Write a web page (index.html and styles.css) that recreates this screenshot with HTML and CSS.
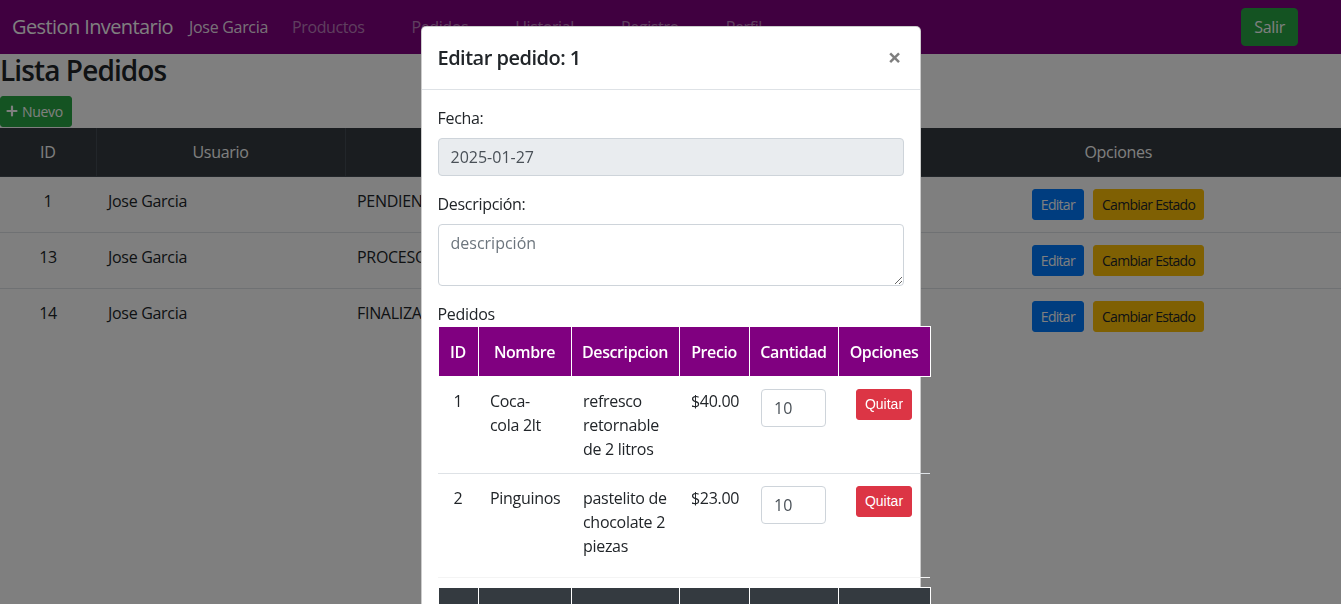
FILE: index.html
```html
<!DOCTYPE html>
<html lang="es">
<head>
<meta charset="utf-8">
<title>Gestion Inventario</title>
<link rel="stylesheet" href="styles.css">
</head>
<body>
<nav class="navbar">
  <span class="brand">Gestion Inventario</span>
  <span class="user">Jose Garcia</span>
  <a class="nav-link">Productos</a>
  <a class="nav-link">Pedidos</a>
  <a class="nav-link">Historial</a>
  <a class="nav-link">Registro</a>
  <a class="nav-link">Perfil</a>
  <button class="btn btn-success salir">Salir</button>
</nav>

<main class="page">
  <h3 class="title">Lista Pedidos</h3>
  <button class="btn btn-sm btn-success nuevo"><svg class="plus" viewBox="0 0 12 12" width="12" height="12"><path d="M6 1.5v9M1.5 6h9" stroke="currentColor" stroke-width="2.2" fill="none" stroke-linecap="round"/></svg>Nuevo</button>
  <table class="list">
    <colgroup><col class="c-id"><col class="c-user"><col class="c-estado"><col class="c-fecha"><col class="c-opt"></colgroup>
    <thead>
      <tr><th>ID</th><th>Usuario</th><th>Estado</th><th>Fecha</th><th>Opciones</th></tr>
    </thead>
    <tbody>
      <tr><td class="center">1</td><td>Jose Garcia</td><td>PENDIENTE</td><td></td><td class="center"><button class="btn btn-sm btn-primary">Editar</button><button class="btn btn-sm btn-warning">Cambiar Estado</button></td></tr>
      <tr><td class="center">13</td><td>Jose Garcia</td><td>PROCESO</td><td></td><td class="center"><button class="btn btn-sm btn-primary">Editar</button><button class="btn btn-sm btn-warning">Cambiar Estado</button></td></tr>
      <tr><td class="center">14</td><td>Jose Garcia</td><td>FINALIZADO</td><td></td><td class="center"><button class="btn btn-sm btn-primary">Editar</button><button class="btn btn-sm btn-warning">Cambiar Estado</button></td></tr>
    </tbody>
  </table>
</main>

<div class="backdrop"></div>

<div class="modal">
  <div class="modal-dialog">
    <div class="modal-header">
      <h5 class="modal-title">Editar pedido: 1</h5>
      <button class="close">&times;</button>
    </div>
    <div class="modal-body">
      <div class="form-group">
        <label>Fecha:</label>
        <input class="form-control" type="text" value="2025-01-27" readonly>
      </div>
      <div class="form-group">
        <label>Descripción:</label>
        <textarea class="form-control" rows="2" placeholder="descripción"></textarea>
      </div>
      <div class="sub-label">Pedidos</div>
      <table class="items">
        <colgroup><col class="i-id"><col class="i-nom"><col class="i-desc"><col class="i-pre"><col class="i-cant"><col class="i-opt"></colgroup>
        <thead>
          <tr><th>ID</th><th>Nombre</th><th>Descripcion</th><th>Precio</th><th>Cantidad</th><th>Opciones</th></tr>
        </thead>
        <tbody>
          <tr><td class="center">1</td><td class="nom">Coca-cola 2lt</td><td>refresco retornable de 2 litros</td><td>$40.00</td><td><input class="form-control qty" type="text" value="10"></td><td class="center"><button class="btn btn-sm btn-danger quitar">Quitar</button></td></tr>
          <tr class="last"><td class="center">2</td><td class="nom">Pinguinos</td><td>pastelito de chocolate 2 piezas</td><td>$23.00</td><td><input class="form-control qty" type="text" value="10"></td><td class="center"><button class="btn btn-sm btn-danger quitar">Quitar</button></td></tr>
          <tr class="spacer"><td colspan="6"></td></tr>
        </tbody>
        <tfoot>
          <tr><td></td><td></td><td></td><td></td><td></td><td></td></tr>
        </tfoot>
      </table>
    </div>
  </div>
</div>
</body>
</html>
```
FILE: styles.css
```css
* { box-sizing: border-box; }

html, body {
  margin: 0;
  height: 100%;
  overflow: hidden;
}

body {
  font-family: "Open Sans", "Noto Sans", sans-serif;
  font-size: 16px;
  line-height: 1.5;
  color: #212529;
  background: #fff;
}

/* Navbar */
.navbar {
  display: flex;
  align-items: center;
  height: 54px;
  padding: 8px 43px 8px 12px;
  background: #800080;
}
.brand {
  font-size: 20px;
  color: #fff;
  margin-right: 16px;
  line-height: 30px;
  letter-spacing: -0.6px;
}
.user {
  color: rgba(255, 255, 255, 0.9);
  letter-spacing: -0.3px;
}
.nav-link {
  color: rgba(255, 255, 255, 0.5);
  padding: 0 23.5px;
  letter-spacing: -0.4px;
}
.user + .nav-link { padding-left: 24px; }

/* Buttons */
.btn {
  display: inline-block;
  font-family: inherit;
  font-size: 16px;
  line-height: 1.5;
  padding: 6px 12px;
  border: 1px solid transparent;
  border-radius: 4px;
  cursor: pointer;
}
.btn-sm {
  font-size: 14px;
  padding: 4px 8px;
  border-radius: 3px;
}
.btn-success { background: #28a745; border-color: #28a745; color: #fff; }
.btn-primary { background: #007bff; border-color: #007bff; color: #fff; }
.btn-warning { background: #ffc107; border-color: #ffc107; color: #212529; }
.btn-danger  { background: #dc3545; border-color: #dc3545; color: #fff; }

.salir {
  margin-left: auto;
  letter-spacing: -0.3px;
}

/* Page */
.page { padding: 0; }
.title {
  margin: 0 0 8px;
  font-size: 28px;
  font-weight: 600;
  line-height: 1.2;
  letter-spacing: -0.9px;
}
.nuevo {
  display: flex;
  align-items: center;
  gap: 4px;
  padding: 4px 8px 4px 5px;
  letter-spacing: -0.3px;
}
.plus { display: block; }

.list {
  width: 100%;
  margin-top: 1px;
  border-collapse: collapse;
  table-layout: fixed;
}
.c-id { width: 96px; }
.c-user { width: 249px; }
.c-estado { width: 275px; }
.c-fecha { width: 275px; }
.c-opt { width: auto; }

.list th {
  background: #343a40;
  color: #fff;
  font-weight: 400;
  padding: 12px;
  text-align: center;
  border-right: 1px solid #454d55;
  border-bottom: 1px solid #454d55;
  letter-spacing: -0.3px;
}
.list th:last-child { border-right: 0; }
.list td {
  padding: 12px;
  border-top: 1px solid #dee2e6;
  vertical-align: top;
  white-space: nowrap;
  letter-spacing: -0.3px;
}
.list tbody tr:first-child td { border-top: 0; }
.center { text-align: center; }
.list .btn { letter-spacing: -0.7px; }
.list .btn + .btn { margin-left: 9px; }

/* Backdrop + modal */
.backdrop {
  position: fixed;
  inset: 0;
  background: rgba(0, 0, 0, 0.5);
}
.modal {
  position: fixed;
  inset: 0;
  overflow: hidden;
}
.modal-dialog {
  width: 500px;
  margin: 26px auto 0;
  background: #fff;
  border: 1px solid rgba(0, 0, 0, 0.2);
  border-radius: 5px;
}
.modal-header {
  display: flex;
  align-items: flex-start;
  justify-content: space-between;
  padding: 16px;
  border-bottom: 1px solid #dee2e6;
}
.modal-title {
  margin: 0;
  font-size: 20px;
  font-weight: 600;
  line-height: 1.5;
  letter-spacing: -0.5px;
}
.close {
  font-family: inherit;
  font-size: 24px;
  font-weight: 700;
  line-height: 1;
  color: #000;
  opacity: 0.5;
  background: none;
  border: 0;
  padding: 16px;
  margin: -14px -14px -16px auto;
}
.modal-body {
  padding: 16px;
}
.form-group { margin-bottom: 16px; }
label {
  display: inline-block;
  margin-bottom: 8px;
  letter-spacing: -0.3px;
}
.form-control {
  display: block;
  width: 100%;
  height: 38px;
  padding: 6px 12px;
  font-family: inherit;
  font-size: 16px;
  line-height: 1.5;
  color: #495057;
  background: #fff;
  border: 1px solid #ced4da;
  border-radius: 4px;
}
.form-control[readonly] { background: #e9ecef; }
textarea.form-control {
  height: 62px;
  resize: vertical;
}
textarea.form-control::placeholder { color: #6c757d; }
.sub-label { letter-spacing: -0.3px; }

.items {
  width: 492px;
  table-layout: fixed;
  border-collapse: collapse;
}
.i-id { width: 40px; }
.i-nom { width: 93px; }
.i-desc { width: 108px; }
.i-pre { width: 70px; }
.i-cant { width: 89px; }
.i-opt { width: 92px; }

.items th {
  background: #800080;
  color: #fff;
  font-weight: 600;
  padding: 12px 0;
  height: 50px;
  text-align: center;
  border: 1px solid #fff;
  letter-spacing: -0.4px;
}
.items td {
  padding: 12px;
  vertical-align: top;
  border-top: 1px solid #dee2e6;
  letter-spacing: -0.3px;
  line-height: 24px;
}
.items td.nom { padding-right: 22px; }
.items tbody tr:first-child td { border-top: 0; }
.items .last td { height: 104px; }
.items .center { padding-left: 0; padding-right: 0; }
.items .spacer td {
  height: 10px;
  padding: 0;
  border-top: 1px solid #f4f4f4;
}
.qty {
  width: 65px;
  letter-spacing: 0;
}
.quitar {
  font-family: "Liberation Sans", Arial, sans-serif;
  font-size: 14px;
  padding: 4px 8px;
  letter-spacing: 0;
}
.items tfoot td {
  background: #343a40;
  height: 48px;
  border: 1px solid #fff;
  border-bottom: 0;
}
```
